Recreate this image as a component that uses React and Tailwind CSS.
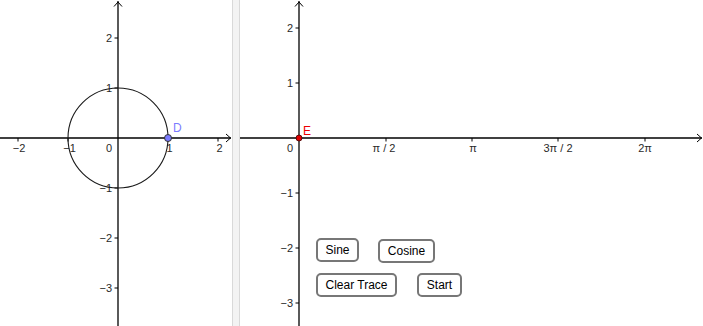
import React from 'react';

const font = 'Arial, "Liberation Sans", sans-serif';

function Axes({ width, ox, oy, xTicks, yTicks }) {
    return (
        <g>
            <line x1={0} y1={oy} x2={width - 1} y2={oy} stroke="#000" strokeWidth={1.3} />
            <path d={`M${width - 6} ${oy - 4} L${width - 1.5} ${oy} L${width - 6} ${oy + 4}`} fill="none" stroke="#000" strokeWidth={1} />
            <line x1={ox} y1={326} x2={ox} y2={1} stroke="#000" strokeWidth={1.3} />
            <path d={`M${ox - 4} ${6.5} L${ox} ${2} L${ox + 4} ${6.5}`} fill="none" stroke="#000" strokeWidth={1} />
            {xTicks.map(t => (
                <g key={t.label}>
                    <line x1={t.x} y1={oy} x2={t.x} y2={oy + 3.5} stroke="#000" strokeWidth={1} />
                    <text x={t.x + (t.dx || 0)} y={oy + 14} fontSize="11" fill="#2a2a2a" textAnchor="middle" fontFamily={font}>{t.label}</text>
                </g>
            ))}
            {yTicks.map(t => (
                <g key={t.label}>
                    <line x1={ox - 3.5} y1={t.y} x2={ox} y2={t.y} stroke="#000" strokeWidth={1} />
                    <text x={ox - 6} y={t.y + 4} fontSize="11" fill="#2a2a2a" textAnchor="end" fontFamily={font}>{t.label}</text>
                </g>
            ))}
            <text x={ox - 6} y={oy + 14} fontSize="11" fill="#2a2a2a" textAnchor="end" fontFamily={font}>0</text>
        </g>
    );
}

function Knop({ label, className }) {
    return (
        <button
            className={`h-6 bg-white border-2 border-[#777] rounded-[5px] text-[12px] text-black leading-none flex items-center justify-center ${className}`}
            style={{ fontFamily: font }}
        >
            {label}
        </button>
    );
}

export default function App() {
    const leftX = [
        { x: 18, label: '−2', dx: 1 },
        { x: 68, label: '−1', dx: 1.5 },
        { x: 168, label: '1', dx: 1.5 },
        { x: 218, label: '2', dx: 1.5 },
    ];
    const leftY = [
        { y: 38, label: '2' },
        { y: 88, label: '1' },
        { y: 188, label: '−1' },
        { y: 238, label: '−2' },
        { y: 288, label: '−3' },
    ];
    const rightX = [
        { x: 146, label: 'π / 2', dx: -2 },
        { x: 232, label: 'π', dx: 1 },
        { x: 318, label: '3π / 2' },
        { x: 405, label: '2π' },
    ];
    const rightY = [
        { y: 28, label: '2' },
        { y: 83, label: '1' },
        { y: 193, label: '−1' },
        { y: 248, label: '−2' },
        { y: 303, label: '−3' },
    ];

    return (
        <div className="w-[703px] h-[326px] flex bg-white overflow-hidden">
            {/* unit circle view */}
            <div className="w-[232px] h-full shrink-0">
                <svg width="232" height="326" className="block">
                    <Axes width={232} ox={118} oy={138} xTicks={leftX} yTicks={leftY} />
                    <circle cx={118} cy={138} r={50} fill="none" stroke="#1a1a1a" strokeWidth={1.1} />
                    <circle cx={168} cy={138} r={3.5} fill="#7b7bff" stroke="#333" strokeWidth={1} />
                    <text x={173} y={132} fontSize="12" fill="#7b7bff" fontFamily={font}>D</text>
                </svg>
            </div>

            {/* splitter */}
            <div className="w-2 h-full shrink-0 bg-[#f3f3f3] border-x border-[#d9d9d9]" />

            {/* graph view */}
            <div className="relative flex-1 h-full">
                <svg width="463" height="326" className="block">
                    <Axes width={463} ox={59} oy={138} xTicks={rightX} yTicks={rightY} />
                    <circle cx={59} cy={138} r={3} fill="#e00000" stroke="#400" strokeWidth={0.8} />
                    <text x={63} y={135} fontSize="12" fill="#ee0000" fontFamily={font}>E</text>
                </svg>
                {/* buttons floating on the graphics canvas */}
                <div className="absolute left-[76px] top-[238px] flex flex-col gap-[10px]">
                    <div className="flex items-start gap-[19px]">
                        <Knop label="Sine" className="w-[43px]" />
                        <Knop label="Cosine" className="w-[57px] mt-px" />
                    </div>
                    <div className="flex items-start gap-5">
                        <Knop label="Clear Trace" className="w-[81px]" />
                        <Knop label="Start" className="w-[45px]" />
                    </div>
                </div>
            </div>
        </div>
    );
}
